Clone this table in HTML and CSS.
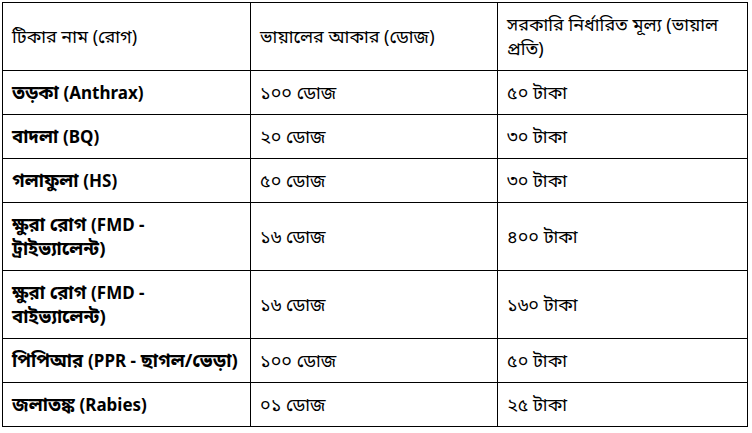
FILE: index.html
```html
<!DOCTYPE html>
<html lang="bn">
<head>
<meta charset="utf-8">
<link rel="stylesheet" href="styles.css">
</head>
<body>
<table class="vaccine-table">
  <colgroup><col class="c1"><col class="c2"><col class="c3"></colgroup>
  <tr class="head">
    <td>টিকার নাম (রোগ)</td>
    <td>ভায়ালের আকার (ডোজ)</td>
    <td>সরকারি নির্ধারিত মূল্য (ভায়াল প্রতি)</td>
  </tr>
  <tr><td class="name">তড়কা <span class="en" lang="en">(Anthrax)</span></td><td>১০০ ডোজ</td><td>৫০ টাকা</td></tr>
  <tr><td class="name">বাদলা <span class="en" lang="en">(BQ)</span></td><td>২০ ডোজ</td><td>৩০ টাকা</td></tr>
  <tr><td class="name">গলাফুলা <span class="en" lang="en">(HS)</span></td><td>৫০ ডোজ</td><td>৩০ টাকা</td></tr>
  <tr><td class="name">ক্ষুরা রোগ <span class="en" lang="en">(FMD -</span> ট্রাইভ্যালেন্ট)</td><td>১৬ ডোজ</td><td>৪০০ টাকা</td></tr>
  <tr><td class="name">ক্ষুরা রোগ <span class="en" lang="en">(FMD -</span> বাইভ্যালেন্ট)</td><td>১৬ ডোজ</td><td>১৬০ টাকা</td></tr>
  <tr><td class="name nowrap">পিপিআর <span class="en" lang="en">(PPR -</span> ছাগল/ভেড়া)</td><td>১০০ ডোজ</td><td>৫০ টাকা</td></tr>
  <tr><td class="name">জলাতঙ্ক <span class="en" lang="en">(Rabies)</span></td><td>০১ ডোজ</td><td>২৫ টাকা</td></tr>
</table>
</body>
</html>
```
FILE: styles.css
```css
html, body {
  margin: 0;
  padding: 0;
  background: #fff;
}
body {
  padding: 2px 0 0 2px;
  font-family: "Noto Sans", "Noto Sans Bengali", sans-serif;
  font-size: 18px;
  color: #000;
}
.vaccine-table {
  border-collapse: collapse;
  width: 745px;
  table-layout: fixed;
}
.c1 { width: 248px; }
.c2 { width: 247px; }
.c3 { width: 250px; }
.vaccine-table td {
  border: 1px solid #000;
  padding: 9px 9px 10px;
  line-height: 24px;
  vertical-align: middle;
  text-align: left;
}
.vaccine-table td.name {
  font-weight: bold;
  font-size: 18.5px;
}
.vaccine-table td.name .en {
  font-size: 17px;
  line-height: 16px;
}
.vaccine-table td.nowrap {
  white-space: nowrap;
}
```
